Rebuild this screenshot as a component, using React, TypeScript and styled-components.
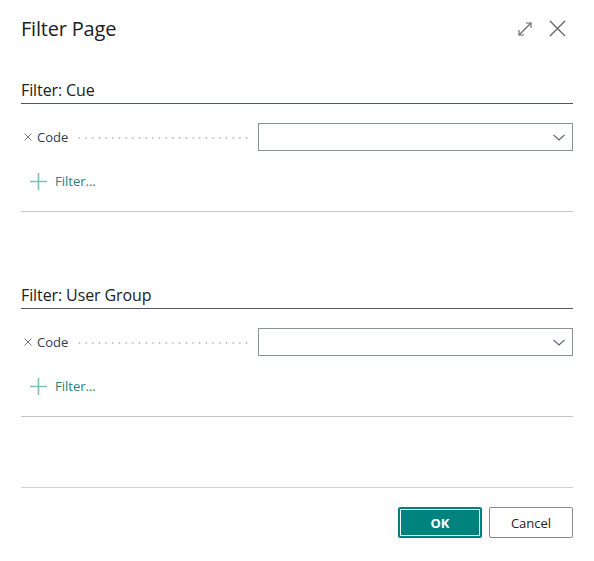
import React from 'react';
import styled, { createGlobalStyle } from 'styled-components';

const GlobalStyle = createGlobalStyle`
    html, body {
        margin: 0;
        padding: 0;
        background: #ffffff;
    }
    body {
        font-family: "Segoe UI", "Open Sans", "Noto Sans", sans-serif;
        color: #212121;
    }
`;

const Dialog = styled.div`
    width: 594px;
    height: 561px;
    box-sizing: border-box;
    padding: 0 21px 0 21px;
    display: flex;
    flex-direction: column;
`;

const Header = styled.div`
    height: 57px;
    display: flex;
    align-items: center;
    justify-content: space-between;
`;

const Title = styled.h1`
    margin: 0;
    font-size: 20px;
    line-height: 28px;
    font-weight: 400;
    letter-spacing: -0.2px;
`;

const HeaderActions = styled.div`
    display: flex;
    align-items: center;
    gap: 16px;
    margin-right: 7px;
`;

const IconButton = styled.button`
    border: none;
    background: none;
    padding: 0;
    display: flex;
    cursor: pointer;
    color: #666666;
`;

const Section = styled.section<{ $gap: number }>`
    margin-top: ${p => p.$gap}px;
    padding-bottom: 16px;
    border-bottom: 1px solid #c6c6c6;
`;

const SectionTitle = styled.h2`
    margin: 0;
    font-size: 16px;
    line-height: 22px;
    font-weight: 400;
    padding-bottom: 2px;
    border-bottom: 1px solid #4b5666;
    letter-spacing: -0.1px;
`;

const FieldRow = styled.div`
    margin-top: 19px;
    height: 28px;
    display: flex;
    align-items: center;
`;

const FieldLabel = styled.div`
    width: 237px;
    display: flex;
    align-items: center;
    padding-left: 3px;
    box-sizing: border-box;
`;

const RemoveIcon = styled.span`
    display: flex;
    color: #7a7a7a;
    margin-right: 5px;
`;

const LabelText = styled.span`
    font-size: 13px;
    color: #2f3d55;
`;

const Leader = styled.span`
    flex: 1;
    height: 2px;
    margin: 2px 10px 0 8px;
    background-image: radial-gradient(circle, #bcbcbc 1px, transparent 1.1px);
    background-size: 6.7px 2px;
    background-repeat: repeat-x;
`;

const SelectBox = styled.div`
    flex: 1;
    height: 28px;
    box-sizing: border-box;
    border: 1px solid #8c9199;
    display: flex;
    align-items: center;
    justify-content: flex-end;
    padding-right: 7px;
    color: #505c6d;
`;

const AddFilter = styled.button`
    margin-top: 16px;
    height: 28px;
    border: none;
    background: none;
    padding: 0 0 0 9px;
    display: flex;
    align-items: center;
    gap: 8px;
    font-family: inherit;
    font-size: 13px;
    color: #26807c;
    cursor: pointer;
`;

const Footer = styled.div`
    margin-top: 70px;
    border-top: 1px solid #d0d0d0;
    padding-top: 19px;
    display: flex;
    justify-content: flex-end;
    gap: 7px;
`;

const ActionButton = styled.button<{ $primary?: boolean }>`
    width: 84px;
    height: 31px;
    box-sizing: border-box;
    border-radius: 2px;
    font-family: inherit;
    font-size: 13px;
    cursor: pointer;
    border: 1px solid ${p => (p.$primary ? '#00807c' : '#8a8a8a')};
    background: ${p => (p.$primary ? '#00827e' : '#ffffff')};
    color: ${p => (p.$primary ? '#ffffff' : '#212121')};
    font-weight: ${p => (p.$primary ? 700 : 400)};
    box-shadow: ${p => (p.$primary ? 'inset 0 0 0 1px #00827e, inset 0 0 0 2px #ffffff' : 'none')};
`;

const ExpandIcon = () => (
    <svg width="16" height="16" viewBox="0 0 16 16" fill="none" stroke="currentColor" strokeWidth="1.1">
        <path d="M2 14 L14 2" />
        <path d="M9 2 H14 V7" />
        <path d="M2 9 V14 H7" />
    </svg>
);

const CloseIcon = () => (
    <svg width="17" height="17" viewBox="0 0 17 17" fill="none" stroke="currentColor" strokeWidth="1.4">
        <path d="M1 1 L16 16 M16 1 L1 16" />
    </svg>
);

const SmallX = () => (
    <svg width="8" height="8" viewBox="0 0 8 8" fill="none" stroke="currentColor" strokeWidth="1">
        <path d="M0.5 0.5 L7.5 7.5 M7.5 0.5 L0.5 7.5" />
    </svg>
);

const Chevron = () => (
    <svg width="12" height="7" viewBox="0 0 12 7" fill="none" stroke="currentColor" strokeWidth="1.1">
        <path d="M0.5 0.8 L6 6 L11.5 0.8" />
    </svg>
);

const Plus = () => (
    <svg width="17" height="17" viewBox="0 0 17 17" fill="none" stroke="#7fbdba" strokeWidth="1.6">
        <path d="M8.5 0 V17 M0 8.5 H17" />
    </svg>
);

const FilterSection = ({ title, gap }: { title: string; gap: number }) => (
    <Section $gap={gap}>
        <SectionTitle>{title}</SectionTitle>
        <FieldRow>
            <FieldLabel>
                <RemoveIcon><SmallX /></RemoveIcon>
                <LabelText>Code</LabelText>
                <Leader />
            </FieldLabel>
            <SelectBox>
                <Chevron />
            </SelectBox>
        </FieldRow>
        <AddFilter>
            <Plus />
            Filter...
        </AddFilter>
    </Section>
);

const App = () => {
    return (
        <>
            <GlobalStyle />
            <Dialog>
                <Header>
                    <Title>Filter Page</Title>
                    <HeaderActions>
                        <IconButton><ExpandIcon /></IconButton>
                        <IconButton><CloseIcon /></IconButton>
                    </HeaderActions>
                </Header>
                <FilterSection title="Filter: Cue" gap={22} />
                <FilterSection title="Filter: User Group" gap={72} />
                <Footer>
                    <ActionButton $primary>OK</ActionButton>
                    <ActionButton>Cancel</ActionButton>
                </Footer>
            </Dialog>
        </>
    );
};

export default App;
